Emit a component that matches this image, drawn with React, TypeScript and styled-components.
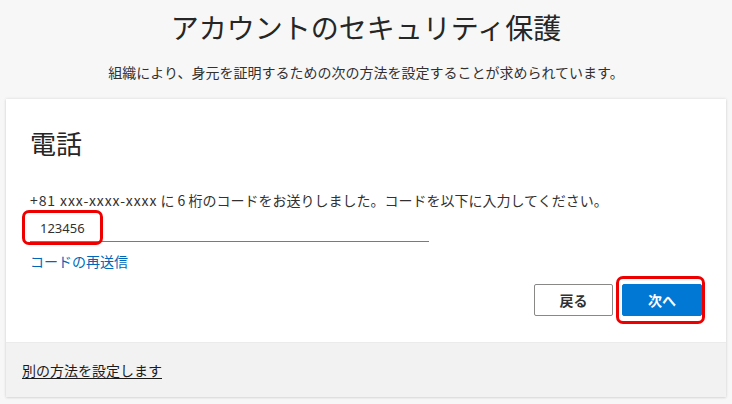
import React from "react";
import styled, { createGlobalStyle } from "styled-components";

const Global = createGlobalStyle`
  html, body { margin: 0; padding: 0; background: #f7f7f7; }
  body {
    font-family: "Noto Sans", "Noto Sans CJK JP", sans-serif;
    color: #323130;
  }
`;

const Page = styled.div`
  width: 732px;
  height: 404px;
  box-sizing: border-box;
  padding: 9px 6px 0 6px;
  display: flex;
  flex-direction: column;
  align-items: stretch;
`;

const Title = styled.h1`
  margin: 0;
  text-align: center;
  font-family: "Noto Sans CJK JP", sans-serif;
  font-weight: 400;
  font-size: 28px;
  line-height: 36px;
  color: #262626;
`;

const Subtitle = styled.p`
  margin: 17px 0 0 0;
  text-align: center;
  font-family: "Noto Sans CJK JP", sans-serif;
  font-size: 14px;
  line-height: 20px;
  color: #323130;
`;

const Card = styled.section`
  margin-top: 17px;
  background: #ffffff;
  box-shadow: 0 0 3px rgba(0, 0, 0, 0.12), 0 1px 2px rgba(0, 0, 0, 0.08);
  display: flex;
  flex-direction: column;
`;

const Body = styled.div`
  padding: 27px 24px 26px 24px;
  display: flex;
  flex-direction: column;
`;

const Heading = styled.h2`
  margin: 0;
  font-family: "Noto Sans CJK JP", sans-serif;
  font-weight: 400;
  font-size: 26px;
  line-height: 34px;
  color: #262626;
`;

const Info = styled.p`
  margin: 31px 0 0 0;
  font-family: "Noto Sans CJK JP", sans-serif;
  font-size: 14px;
  line-height: 18px;
  color: #323130;
  white-space: nowrap;
`;

const Phone = styled.span`
  letter-spacing: 0.9px;
`;

const InputWrap = styled.div`
  position: relative;
  width: 399px;
  margin-top: 6px;
`;

const CodeInput = styled.div`
  height: 26px;
  box-sizing: content-box;
  border-bottom: 1px solid #7a7a7a;
  padding-left: 10px;
  display: flex;
  align-items: center;
  font-family: "Noto Sans", sans-serif;
  font-size: 13px;
  color: #323130;
`;

const Highlight = styled.div<{ $top: number; $left: number; $w: number; $h: number }>`
  position: absolute;
  top: ${(p) => p.$top}px;
  left: ${(p) => p.$left}px;
  width: ${(p) => p.$w}px;
  height: ${(p) => p.$h}px;
  box-sizing: border-box;
  border: 3px solid #ee0000;
  border-radius: 7px;
  pointer-events: none;
`;

const Resend = styled.a`
  margin-top: 10px;
  align-self: flex-start;
  font-family: "Noto Sans CJK JP", sans-serif;
  font-size: 14px;
  line-height: 18px;
  color: #0067b8;
  text-decoration: none;
`;

const Actions = styled.div`
  margin-top: 14px;
  display: flex;
  justify-content: flex-end;
  gap: 9px;
`;

const ButtonSlot = styled.div`
  position: relative;
`;

const Button = styled.button<{ $primary?: boolean }>`
  width: ${(p) => (p.$primary ? 80 : 79)}px;
  height: 32px;
  box-sizing: border-box;
  border: 1px solid ${(p) => (p.$primary ? "#0078d4" : "#8a8886")};
  background: ${(p) => (p.$primary ? "#0078d4" : "#ffffff")};
  color: ${(p) => (p.$primary ? "#ffffff" : "#323130")};
  font-family: "Noto Sans CJK JP", sans-serif;
  font-weight: 700;
  font-size: 14px;
  border-radius: 2px;
  padding: 0;
  cursor: pointer;
`;

const Footer = styled.div`
  height: 55px;
  box-sizing: border-box;
  background: #f2f2f2;
  border-top: 1px solid #ebebeb;
  padding: 0 16px;
  display: flex;
  align-items: center;
`;

const OtherMethod = styled.a`
  font-family: "Noto Sans CJK JP", sans-serif;
  font-size: 14px;
  line-height: 18px;
  color: #1b1b1b;
  text-decoration: underline;
  text-underline-offset: 2px;
`;

export default function App() {
  return (
    <>
      <Global />
      <Page>
        <Title>アカウントのセキュリティ保護</Title>
        <Subtitle>
          組織により、身元を証明するための次の方法を設定することが求められています。
        </Subtitle>
        <Card>
          <Body>
            <Heading>電話</Heading>
            <Info>
              <Phone>+81 xxx-xxxx-xxxx</Phone> に 6 桁のコードをお送りしました。コードを以下に入力してください。
            </Info>
            <InputWrap>
              <CodeInput>123456</CodeInput>
              <Highlight $top={-5} $left={-8} $w={81} $h={35} />
            </InputWrap>
            <Resend href="#">コードの再送信</Resend>
            <Actions>
              <Button>戻る</Button>
              <ButtonSlot>
                <Button $primary>次へ</Button>
                <Highlight $top={-8} $left={-6} $w={89} $h={48} />
              </ButtonSlot>
            </Actions>
          </Body>
          <Footer>
            <OtherMethod href="#">別の方法を設定します</OtherMethod>
          </Footer>
        </Card>
      </Page>
    </>
  );
}
